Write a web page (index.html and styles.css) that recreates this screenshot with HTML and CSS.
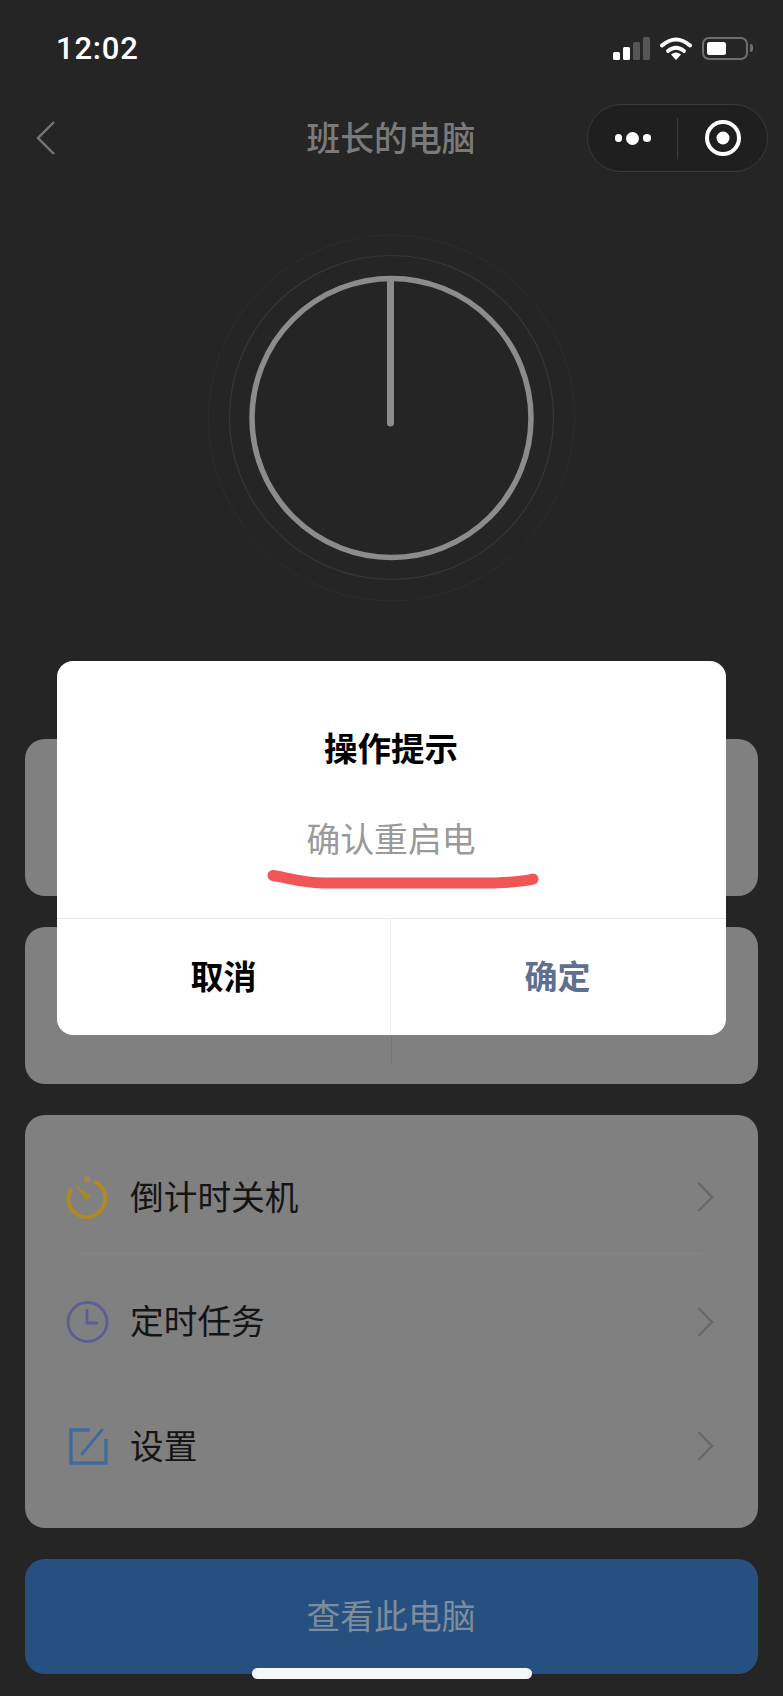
FILE: index.html
```html
<!DOCTYPE html>
<html lang="zh-CN">
<head>
<meta charset="utf-8">
<title>班长的电脑</title>
<link rel="stylesheet" href="styles.css">
</head>
<body>
<div class="page">
  <header class="status">
    <span class="time">12:02</span>
    <div class="status-icons">
      <div class="signal">
        <i class="bar bar-1"></i><i class="bar bar-2"></i><i class="bar bar-3"></i><i class="bar bar-4"></i>
      </div>
      <svg class="wifi" width="32" height="23" viewBox="0 0 32 23">
        <path d="M2 8.500Q16-3.500 30 8.500" fill="none" stroke="#fff" stroke-width="4" stroke-linecap="round"/>
        <path d="M8 14Q16 7.500 24 14" fill="none" stroke="#fff" stroke-width="3.800" stroke-linecap="round"/>
        <path d="M16 23L11 17.600Q16 13.600 21 17.600Z" fill="#fff"/>
      </svg>
      <div class="battery"><div class="battery-body"><div class="battery-fill"></div></div><div class="battery-nub"></div></div>
    </div>
  </header>

  <nav class="nav">
    <svg class="back" width="19" height="34" viewBox="0 0 19 34"><path d="M18 1L2 17l16 16" fill="none" stroke="#777" stroke-width="2.400"/></svg>
    <h1 class="nav-title">班长的电脑</h1>
    <div class="capsule">
      <div class="capsule-side capsule-more"><i class="dot"></i><i class="dot dot-big"></i><i class="dot"></i></div>
      <div class="capsule-line"></div>
      <div class="capsule-side"><svg width="38" height="38" viewBox="0 0 38 38"><circle cx="19" cy="19" r="16" fill="none" stroke="#fff" stroke-width="4"/><circle cx="19" cy="19" r="6.500" fill="#fff"/></svg></div>
    </div>
  </nav>

  <div class="dial">
    <svg width="400" height="400" viewBox="0 0 400 400">
      <circle cx="201.500" cy="200" r="183" fill="none" stroke="#2d2d2d" stroke-width="1" stroke-dasharray="70 6 110 4"/>
      <circle cx="201.500" cy="199.500" r="162" fill="none" stroke="#373737" stroke-width="1.200"/>
      <circle cx="201.500" cy="200" r="139.500" fill="none" stroke="#8c8c8c" stroke-width="5.500"/>
      <path d="M200.500 62V205" fill="none" stroke="#8c8c8c" stroke-width="7" stroke-linecap="round"/>
    </svg>
  </div>

  <main class="stack">
    <section class="card card-small"></section>
    <section class="card card-small card-split"><div class="split-line"></div></section>
    <section class="card card-list">
      <div class="row row-first">
        <svg class="row-icon" width="44" height="44" viewBox="0 0 44 44">
          <path d="M5.500 15A18.500 18.500 0 1 0 31 7.500" fill="none" stroke="#b08a20" stroke-width="3.800" stroke-linecap="round"/>
          <circle cx="22" cy="4.500" r="3" fill="#a3894a"/>
          <path d="M10 10L26 21 21 26Z" fill="#a3892f"/>
        </svg>
        <span class="row-text">倒计时关机</span>
        <svg class="row-arrow" width="17" height="30" viewBox="0 0 17 30"><path d="M1.500 1L15 15 1.500 29" fill="none" stroke="#666" stroke-width="2.200"/></svg>
      </div>
      <div class="row">
        <svg class="row-icon" width="44" height="44" viewBox="0 0 44 44">
          <circle cx="22.500" cy="22" r="19.500" fill="none" stroke="#5d5d96" stroke-width="2.800"/>
          <path d="M22 9V23H33" fill="none" stroke="#5d5d96" stroke-width="2.800"/>
        </svg>
        <span class="row-text">定时任务</span>
        <svg class="row-arrow" width="17" height="30" viewBox="0 0 17 30"><path d="M1.500 1L15 15 1.500 29" fill="none" stroke="#666" stroke-width="2.200"/></svg>
      </div>
      <div class="row">
        <svg class="row-icon" width="44" height="44" viewBox="0 0 44 44">
          <path d="M25 6H6V39H41V15" fill="none" stroke="#3f6ba0" stroke-width="3.400"/>
          <path d="M17 30L37 6" fill="none" stroke="#3f6ba0" stroke-width="3" stroke-linecap="round"/>
        </svg>
        <span class="row-text">设置</span>
        <svg class="row-arrow" width="17" height="30" viewBox="0 0 17 30"><path d="M1.500 1L15 15 1.500 29" fill="none" stroke="#666" stroke-width="2.200"/></svg>
      </div>
    </section>
    <button class="view-btn" type="button">查看此电脑</button>
  </main>

  <div class="dialog">
    <div class="dialog-main">
      <h2 class="dialog-title">操作提示</h2>
      <p class="dialog-body">确认重启电</p>
    </div>
    <svg class="scribble" width="280" height="30" viewBox="0 0 280 30">
      <path d="M9 9.500C25 12 40 17 60 17H215C240 17 258 16 269 13" fill="none" stroke="#f25556" stroke-width="11" stroke-linecap="round"/>
    </svg>
    <div class="dialog-actions">
      <div class="action action-cancel">取消</div>
      <div class="action action-ok">确定</div>
    </div>
  </div>

  <div class="home-bar"></div>
</div>
</body>
</html>
```

FILE: styles.css
```css
* { box-sizing: border-box; }
html, body { margin: 0; padding: 0; background: #252525; }
body { font-family: "Noto Sans CJK SC", "Noto Sans", sans-serif; }
h1, h2, p { margin: 0; }

.page { position: relative; width: 783px; height: 1696px; overflow: hidden; background: #252525; }

.status { height: 96px; padding: 0 30px 0 56px; display: flex; align-items: center; justify-content: space-between; }
.time { font-family: Roboto, "Liberation Sans", sans-serif; font-weight: 500; font-size: 31px; letter-spacing: 0.800px; line-height: 1; color: #fff; }
.status-icons { display: flex; align-items: center; gap: 10px; }
.signal { display: flex; align-items: flex-end; gap: 3.400px; height: 23px; }
.bar { display: block; width: 6.600px; border-radius: 1.500px; background: #fff; }
.bar-1 { height: 8px; }
.bar-2 { height: 13px; }
.bar-3 { height: 18px; background: #565656; }
.bar-4 { height: 23px; background: #565656; }
.battery { display: flex; align-items: center; gap: 2px; }
.battery-body { width: 46px; height: 23px; padding: 3px; border: 2px solid #6e6e6e; border-radius: 7px; }
.battery-fill { width: 19px; height: 100%; border-radius: 2.500px; background: #fff; }
.battery-nub { width: 3px; height: 8px; background: #6e6e6e; border-radius: 0 3px 3px 0; }

.nav { position: relative; height: 84px; padding: 0 15px 0 36px; display: flex; align-items: center; justify-content: space-between; }
.nav-title { position: absolute; left: 0; right: 1px; padding-bottom: 2px; text-align: center; font-size: 33.800px; font-weight: 500; line-height: 44px; color: #7a7a7a; }
.capsule { display: flex; align-items: center; width: 181px; height: 68px; border: 1.500px solid #3a3a3a; border-radius: 34px; background: #1f1f1f; }
.capsule-side { flex: 1; display: flex; align-items: center; justify-content: center; }
.capsule-more { gap: 4px; }
.capsule-line { width: 1px; height: 41px; background: #3a3a3a; }
.dot { display: block; width: 7.500px; height: 7.500px; border-radius: 50%; background: #fff; }
.dot-big { width: 13px; height: 13px; }

.dial { margin-top: 38px; height: 400px; padding-left: 190px; }
.dial svg { display: block; }

.stack { margin-top: 121px; padding: 0 25px; display: flex; flex-direction: column; gap: 31px; }
.card { width: 733px; border-radius: 20px; background: #808080; }
.card-small { height: 157px; }
.card-split { display: flex; justify-content: center; padding-top: 21px; }
.split-line { width: 1px; height: 115px; background: #767676; }
.card-list { height: 413px; padding-top: 20px; }

.row { position: relative; height: 124.500px; padding: 0 44px 0 40px; display: flex; align-items: center; }
.row-first::after { content: ""; position: absolute; left: 55px; right: 55px; bottom: 6px; height: 1px; background: #858585; }
.row-icon { flex: none; }
.row-text { margin-left: 21px; padding-bottom: 3px; flex: 1; font-size: 33.700px; line-height: 44px; color: #141414; }
.row-arrow { flex: none; }

.view-btn { display: block; width: 733px; height: 115px; padding: 0 1px 4px 0; border: 0; border-radius: 20px; background: #265080; font: inherit; font-size: 33.800px; color: #7f8c9c; text-align: center; }

.dialog { position: absolute; left: 57px; top: 661px; width: 669px; height: 374px; display: flex; flex-direction: column; border-radius: 16px; background: #fff; }
.dialog-main { height: 258px; padding-top: 64px; text-align: center; border-bottom: 1px solid #e8e8e8; }
.dialog-title { padding-right: 1px; font-size: 33.500px; font-weight: 700; line-height: 44px; color: #000; }
.dialog-body { margin-top: 47px; padding-right: 1px; font-size: 33.800px; line-height: 44px; color: #999; }
.scribble { position: absolute; left: 207px; top: 205px; }
.dialog-actions { flex: 1; display: flex; }
.action { flex: 1; display: flex; align-items: center; justify-content: center; padding-bottom: 4px; font-size: 33px; line-height: 44px; font-weight: 700; }
.action-cancel { color: #000; border-right: 1px solid #ededed; }
.action-ok { padding-right: 2px; color: #5f6f8f; }

.home-bar { position: absolute; left: 252px; top: 1668px; width: 280px; height: 11px; border-radius: 6px; background: #f6f6f9; }
```
